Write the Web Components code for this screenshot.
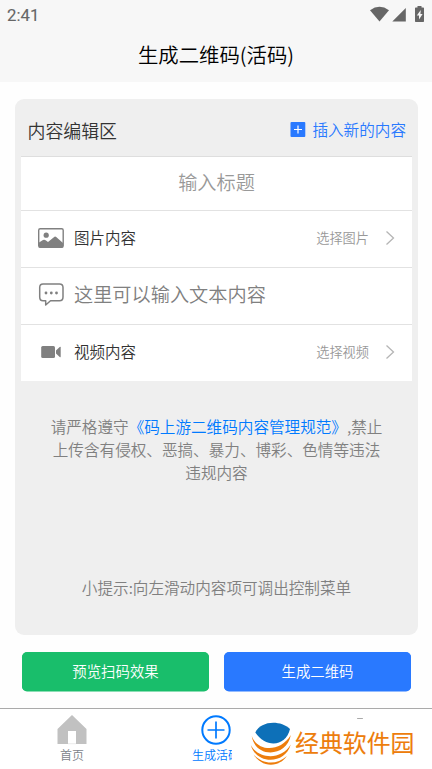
<!DOCTYPE html>
<html lang="zh-CN">
<head>
<meta charset="utf-8">
<title>生成二维码(活码)</title>
<style>
body{margin:0;background:#fefefe;font-family:"Noto Sans CJK SC DemiLight","Noto Sans CJK SC",sans-serif;font-weight:350}
</style>
</head>
<body>
<qr-app></qr-app>
<script>
const define = (name, html) => customElements.define(name, class extends HTMLElement {
  constructor() {
    super();
    const t = document.createElement('template');
    t.innerHTML = html;
    this.attachShadow({ mode: 'open' }).append(t.content.cloneNode(true));
  }
});

define('status-bar', `
<style>
:host{display:flex;height:30px;padding:0 7px;justify-content:space-between;color:#666;font:400 16.8px/30px Roboto,sans-serif;-webkit-text-stroke:.1px #666}
svg{display:block}
</style>
<span>2:41</span>
<svg width="56" height="30" viewBox="369 0 56 30" fill="#666">
<path d="M370 10.2Q379.500 3.500 389 10.200L379.500 21.500Z"/>
<path d="M405.800 8V21.500H392.300Z"/>
<path fill-rule="evenodd" d="M417.500 6h4v1.500h1.800q.7 0 .7.800v13q0 .7-.7.700h-7.600q-.7 0-.7-.7v-13q0-.8.7-.8h1.800zM420.800 10l-4 5.500h2.200v4l3.600-5.500h-2.200z"/>
</svg>`);

define('page-header', `
<style>
:host{display:block;height:82px;background:#f7f7f7}
h1{margin:0;height:50px;font-size:20.4px;font-weight:inherit;line-height:49px;text-align:center;color:#000}
</style>
<status-bar></status-bar><h1><slot></slot></h1>`);

define('editor-head', `
<style>
:host{display:flex;height:57px;align-items:center;justify-content:space-between;padding:0 6px;box-sizing:content-box;border-bottom:1px solid #dedede}
.t{font-size:17.900px;line-height:30px;color:#333;padding-top:4px;padding-left:.500px}
.a{display:flex;align-items:center;gap:6px;font-size:15.600px;line-height:30px;color:#2979ff;padding-top:3px}
svg{display:block}
</style>
<span class="t">内容编辑区</span>
<span class="a"><svg width="16" height="15" viewBox="0 0 16 15"><rect x=".5" width="14.800" height="15" rx="1" fill="#2979ff"/><path d="M4 7.500h8M8 3.500v8" stroke="#fff" stroke-width="1.200"/></svg>插入新的内容</span>`);

define('content-row', `
<style>
:host{display:flex;align-items:center;height:56px;padding:0 16px;border-bottom:1px solid #e2e2e2;background:#fff;font-size:15.500px;color:#333}
:host([last]){border-bottom:0}
:host([title]){height:53px;justify-content:center;font-size:19.200px;color:#999}
:host([placeholder]){font-size:19.200px;color:#808080}
:host([title]) .icon,:host([title]) .more,:host([placeholder]) .more{display:none}
.icon{width:28px;height:28px;margin-right:9px}
.label{line-height:28px;padding-bottom:4px}
:host([placeholder]) .label{padding-bottom:5px}
:host([title]) .label{padding-bottom:3px}
.more{display:flex;align-items:center;margin-left:auto;gap:16px;font-size:13.200px;line-height:20px;color:#999;padding-bottom:2px}
svg{display:block}
</style>
<span class="icon"><slot name="icon"></slot></span>
<span class="label"><slot></slot></span>
<span class="more"><slot name="more"></slot><svg width="11" height="16" viewBox="0 0 11 16"><path d="M1.500 1.500 8.500 8 1.500 14.500" fill="none" stroke="#b5b5b5" stroke-width="1.300"/></svg></span>`);

define('action-button', `
<style>
:host{display:block;flex:1;height:39px;border-radius:5px;background:var(--fill);color:#fff;text-align:center;font-size:14.400px;line-height:38px;box-shadow:0 .5px 0 var(--fill)}
</style><slot></slot>`);

define('tab-item', `
<style>
:host{display:flex;flex-direction:column;align-items:center;width:144px;font-size:12px;line-height:18px;color:#7c8289}
:host([active]){color:#007aff}
.label{white-space:nowrap;overflow:hidden;margin-top:1px}
:host([active]) .label{width:40px;margin-left:-8px}
</style>
<slot name="icon"></slot><span class="label"><slot></slot></span>`);

define('site-mark', `
<style>
:host{position:absolute;left:232px;top:11px;display:flex;align-items:center;width:200px;height:49px;background:#fff;color:#ed7d0c;font-family:"Noto Sans CJK SC",sans-serif;font-size:23.900px;font-weight:400;line-height:36px}
svg{display:block;margin:0 2px 0 17px;flex:none}
span{white-space:nowrap;padding-bottom:5px;-webkit-text-stroke:.1px #ed7d0c}
</style>
<svg width="44" height="46" viewBox="249 721.500 44 46">
<path d="M255.300 732C260.500 720.500 280 719 290 728.500C286 746 266 748 255.300 732Z" fill="#0d70b8"/>
<g fill="#ed7d0c">
<path d="M251.800 735.500C257 751 280 752.500 290.800 734.500C287 757 255 758 251.800 735.500Z"/>
<path d="M250.800 744.500C258 758.500 281 760.500 290.800 744C285 764.500 256 764 250.800 744.500Z"/>
<path d="M253.500 754C263 764.500 277 764.500 287 755.500C279 767.500 261 767 253.500 754Z"/>
</g></svg><span>经典软件园</span>`);

define('tab-bar', `
<style>
:host{position:relative;display:flex;height:60px;background:#fff;border-top:1px solid #aaa;overflow:hidden}
svg{display:block}
i{position:absolute;left:357px;top:9px;width:6px;height:1px;border-radius:1px;background:#aaa}
</style>
<tab-item><svg slot="icon" width="32" height="36" viewBox="56 709 32 36"><path d="M72 715 86.500 729V744H76V731H68V744H57.500V729Z" fill="#c1c1c1"/><path d="M68 743.700h8" stroke="#ddd" stroke-width=".6"/></svg>首页</tab-item>
<tab-item active><svg slot="icon" width="32" height="36" viewBox="200 709 32 36" fill="none" stroke="#007aff"><circle cx="216" cy="730" r="13.700" stroke-width="2"/><path d="M207.500 730h17M216 721.500v17" stroke-width="1.700"/></svg>生成活码</tab-item>
<site-mark></site-mark><i></i>`);

define('qr-app', `
<style>
:host{display:flex;flex-direction:column;height:769px;width:432px;overflow:hidden}
.card{display:flex;flex-direction:column;align-items:stretch;margin:17px 14px 0 15px;height:536px;padding:0 6px;box-sizing:border-box;border-radius:9px;background:#efefef}
p{margin:0;text-align:center;color:#808080;font-size:15.600px;line-height:23px;white-space:nowrap}
.rule{padding-top:34px}
.tip{margin-top:auto;padding-bottom:36px}
b{font-weight:inherit;color:#007aff}
.actions{display:flex;gap:15px;margin:17px 21px 0 22px}
tab-bar{margin-top:auto}
svg{display:block}
</style>
<page-header>生成二维码(活码)</page-header>
<section class="card">
<editor-head></editor-head>
<content-row title="">输入标题</content-row>
<content-row><svg slot="icon" width="28" height="28" viewBox="37 225 28 28"><rect x="38.700" y="228.700" width="24.500" height="18.500" rx="1.500" fill="none" stroke="#808080" stroke-width="1.400"/><circle cx="46.200" cy="235.200" r="2.600" fill="#808080"/><path d="M39 242.500 43 240Q44.500 239.300 46 240.500L48 242 54.500 236.800Q55.300 236.200 56.200 237L63 243V247.500H39Z" fill="#808080"/></svg>图片内容<span slot="more">选择图片</span></content-row>
<content-row placeholder><svg slot="icon" width="28" height="28" viewBox="37 282 28 28"><path d="M43 284H59.500Q63 284 63 287.500V297Q63 300.800 59.500 300.800H50.500L45.700 305V300.800H43Q39.700 300.800 39.700 297V287.500Q39.700 284 43 284Z" fill="none" stroke="#808080" stroke-width="1.500" stroke-linejoin="round"/><g fill="#808080"><circle cx="46" cy="293" r="1.400"/><circle cx="51.300" cy="293" r="1.400"/><circle cx="56.500" cy="293" r="1.400"/></g></svg>这里可以输入文本内容</content-row>
<content-row last><svg slot="icon" width="28" height="28" viewBox="37 339 28 28" fill="#808080"><rect x="41.200" y="346" width="13.800" height="12" rx="1.500"/><path d="M56 350.500 59.700 347Q60.700 346.200 60.700 347.500V356.500Q60.700 357.700 59.700 357L56 353.500Z"/></svg>视频内容<span slot="more">选择视频</span></content-row>
<p class="rule">请严格遵守<b>《码上游二维码内容管理规范》</b>,禁止<br>上传含有侵权、恶搞、暴力、博彩、色情等违法<br>违规内容</p>
<p class="tip">小提示:向左滑动内容项可调出控制菜单</p>
</section>
<div class="actions"><action-button style="--fill:#19be6b">预览扫码效果</action-button><action-button style="--fill:#2979ff">生成二维码</action-button></div>
<tab-bar></tab-bar>`);
</script>
</body>
</html>
